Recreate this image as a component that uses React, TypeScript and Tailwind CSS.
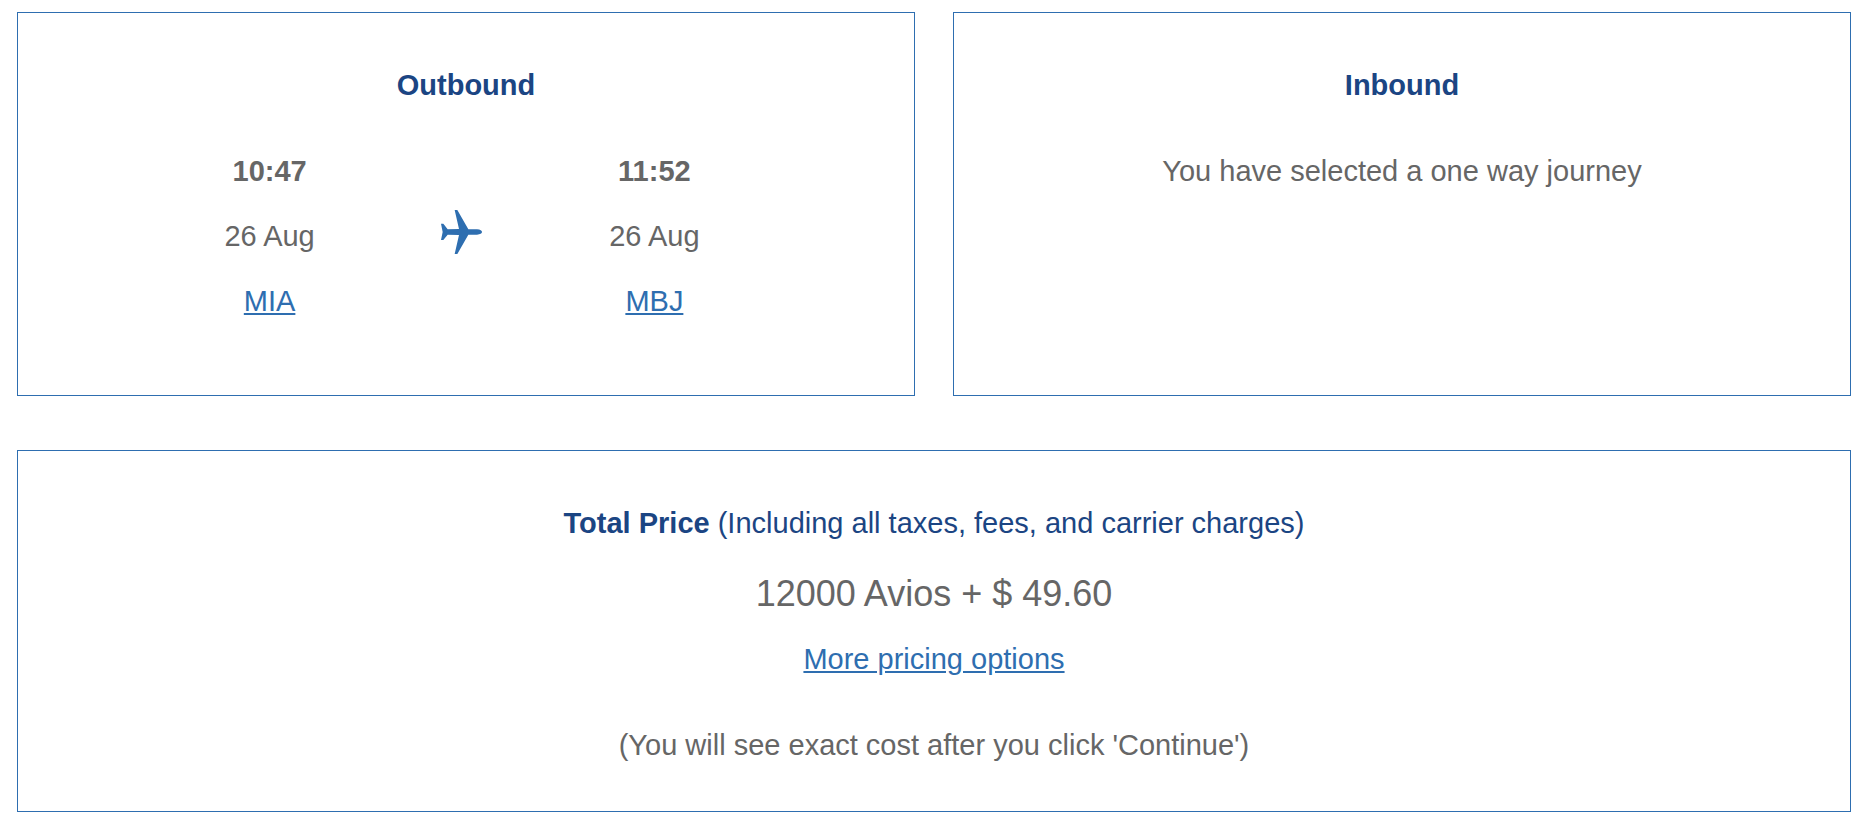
import React from 'react';

interface Stop {
  time: string;
  date: string;
  airport: string;
}

const departure: Stop = { time: '10:47', date: '26 Aug', airport: 'MIA' };
const arrival: Stop = { time: '11:52', date: '26 Aug', airport: 'MBJ' };

const PlaneIcon: React.FC = () => (
  <svg viewBox="0 0 123 132" className="w-[41px] h-11 fill-[#2e6eb0]" aria-hidden="true">
    <path d="M41 0h8l33 58h26c10 1 15 4 15 8s-5 7-15 8H82L49 132h-8l13-57-34-1L7 90H0l5-24L0 41h7l13 17 34-1z" />
  </svg>
);

const FlightStop: React.FC<{ stop: Stop }> = ({ stop }) => (
  <div className="flex flex-col items-center gap-[29px]">
    <p className="font-bold">{stop.time}</p>
    <p>{stop.date}</p>
    <a href="#" className="text-[#2e6eb0] underline">{stop.airport}</a>
  </div>
);

const App: React.FC = () => {
  return (
    <main className="pl-[17px] pr-[15px] py-3 bg-white text-center text-[29px] leading-9 text-[#666666] font-['Liberation_Sans',Arial,sans-serif]">
      <div className="grid grid-cols-2 gap-[38px]">
        <section className="border border-[#2e6eb0] pt-[54px] pb-[76px]">
          <h2 className="font-bold text-[#1b4583] mb-[50px]">Outbound</h2>
          <div className="pr-2">
            <div className="grid grid-cols-3 items-center w-[65%] mx-auto">
              <FlightStop stop={departure} />
              <div className="flex justify-center pb-2">
                <PlaneIcon />
              </div>
              <FlightStop stop={arrival} />
            </div>
          </div>
        </section>

        <section className="border border-[#2e6eb0] pt-[54px] pb-[76px]">
          <h2 className="font-bold text-[#1b4583] mb-[50px]">Inbound</h2>
          <p>You have selected a one way journey</p>
        </section>
      </div>

      <section className="border border-[#2e6eb0] mt-[54px] pt-[54px] pb-12">
        <h2 className="text-[#1b4583]">
          <strong>Total Price</strong> (Including all taxes, fees, and carrier charges)
        </h2>
        <p className="mt-[30px] text-4xl leading-[46px]">12000 Avios + $ 49.60</p>
        <p className="mt-6">
          <a href="#" className="text-[#2e6eb0] underline">More pricing options</a>
        </p>
        <p className="mt-[50px]">(You will see exact cost after you click 'Continue')</p>
      </section>
    </main>
  );
};

export default App;
